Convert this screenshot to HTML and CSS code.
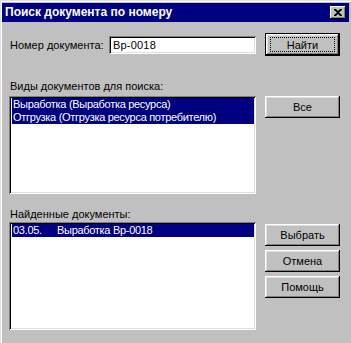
FILE: index.html
```html
<!DOCTYPE html>
<html lang="ru">
<head>
    <meta charset="UTF-8">
    <title>Поиск документа по номеру</title>
    <link rel="stylesheet" href="styles.css">
</head>
<body>
<div class="window">
    <div class="titlebar">
        <span class="title">Поиск документа по номеру</span>
        <span class="close-btn">
            <svg width="8" height="7" viewBox="0 0 8 7">
                <path d="M0 0h2l2 2 2-2h2v1l-3 2.5 3 2.5v1h-2l-2-2-2 2h-2v-1l3-2.5-3-2.5z" fill="#000"/>
            </svg>
        </span>
    </div>

    <div class="content">
        <div class="search-row">
            <label for="nomer">Номер документа:</label>
            <div class="field" id="nomer">Вр-0018</div>
        </div>
        <div class="btn default"><span class="focus">Найти</span></div>

        <div class="caption">Виды документов для поиска:</div>

        <div class="listbox types">
            <div class="item selected">Выработка (Выработка ресурса)</div>
            <div class="item selected">Отгрузка (Отгрузка ресурса потребителю)</div>
        </div>
        <div class="side">
            <div class="btn">Все</div>
        </div>

        <div class="caption second">Найденные документы:</div>

        <div class="listbox found">
            <div class="item selected"><span class="date">03.05.</span>Выработка Вр-0018</div>
        </div>
        <div class="side buttons">
            <div class="btn">Выбрать</div>
            <div class="btn">Отмена</div>
            <div class="btn">Помощь</div>
        </div>
    </div>
</div>
</body>
</html>
```

FILE: styles.css
```css
body {
    margin: 0;
    background-color: #c0c0c0;
    font-family: 'Liberation Sans', Arial, sans-serif;
    font-size: 11px;
    color: #000000;
    width: 351px;
    height: 343px;
    overflow: hidden;
}

.window {
    height: 343px;
    box-sizing: border-box;
    border-top: 1px solid #dfdfdf;
    border-left: 1px solid #dfdfdf;
    box-shadow: inset 1px 1px #ffffff;
    padding: 2px 2px 0 1px;
}

.titlebar {
    height: 19px;
    background-color: #000080;
    color: #ffffff;
    display: flex;
    align-items: center;
    justify-content: space-between;
    padding: 0 3px 0 3px;
}

.title {
    font-weight: bold;
    font-size: 12px;
    line-height: 19px;
}

.close-btn {
    width: 16px;
    height: 13px;
    box-sizing: border-box;
    background-color: #c0c0c0;
    box-shadow: inset -1px -1px #000000, inset 1px 1px #ffffff, inset -2px -2px #808080;
    display: flex;
    align-items: center;
    justify-content: center;
    padding-bottom: 1px;
}

.content {
    display: grid;
    grid-template-columns: 247px 75px;
    column-gap: 9px;
    padding-left: 7px;
    padding-top: 11px;
    align-items: start;
}

.search-row {
    display: flex;
    align-items: center;
    justify-content: space-between;
    height: 23px;
}

.search-row label {
    padding-left: 1px;
}

.field {
    width: 147px;
    height: 18px;
    box-sizing: border-box;
    background-color: #ffffff;
    box-shadow: inset 1px 1px #808080, inset -1px -1px #ffffff, inset 2px 2px #000000, inset -2px -2px #dfdfdf;
    padding: 2px 4px;
    line-height: 14px;
    font-size: 11px;
    letter-spacing: 0.2px;
}

.btn {
    height: 22px;
    box-sizing: border-box;
    background-color: #c0c0c0;
    box-shadow: inset -1px -1px #000000, inset 1px 1px #ffffff, inset -2px -2px #808080, inset 2px 2px #dfdfdf;
    display: flex;
    align-items: center;
    justify-content: center;
    font-size: 11px;
    padding-bottom: 1px;
}

.btn.default {
    height: 23px;
    border: 1px solid #000000;
    padding-bottom: 0;
}

.focus {
    display: flex;
    align-items: center;
    justify-content: center;
    width: 63px;
    height: 13px;
    border: 1px dotted #000000;
}

.caption {
    grid-column: 1 / 3;
    margin-top: 24px;
    padding-left: 1px;
    line-height: 13px;
}

.caption.second {
    margin-top: 14px;
}

.listbox {
    background-color: #ffffff;
    box-shadow: inset 1px 1px #808080, inset -1px -1px #ffffff, inset 2px 2px #000000, inset -2px -2px #dfdfdf;
    padding: 2px 2px 2px 3px;
    box-sizing: border-box;
    margin-top: 3px;
}

.listbox.types {
    height: 98px;
}

.listbox.found {
    height: 108px;
    margin-top: 1px;
}

.item {
    line-height: 13px;
    height: 13px;
    padding-left: 1px;
    white-space: nowrap;
    font-size: 11px;
    letter-spacing: -0.3px;
}

.item.selected {
    background-color: #000080;
    color: #ffffff;
}

.date {
    display: inline-block;
    width: 44px;
}

.side {
    margin-top: 3px;
}

.buttons {
    margin-top: 3px;
    display: flex;
    flex-direction: column;
    gap: 4px;
}
```
